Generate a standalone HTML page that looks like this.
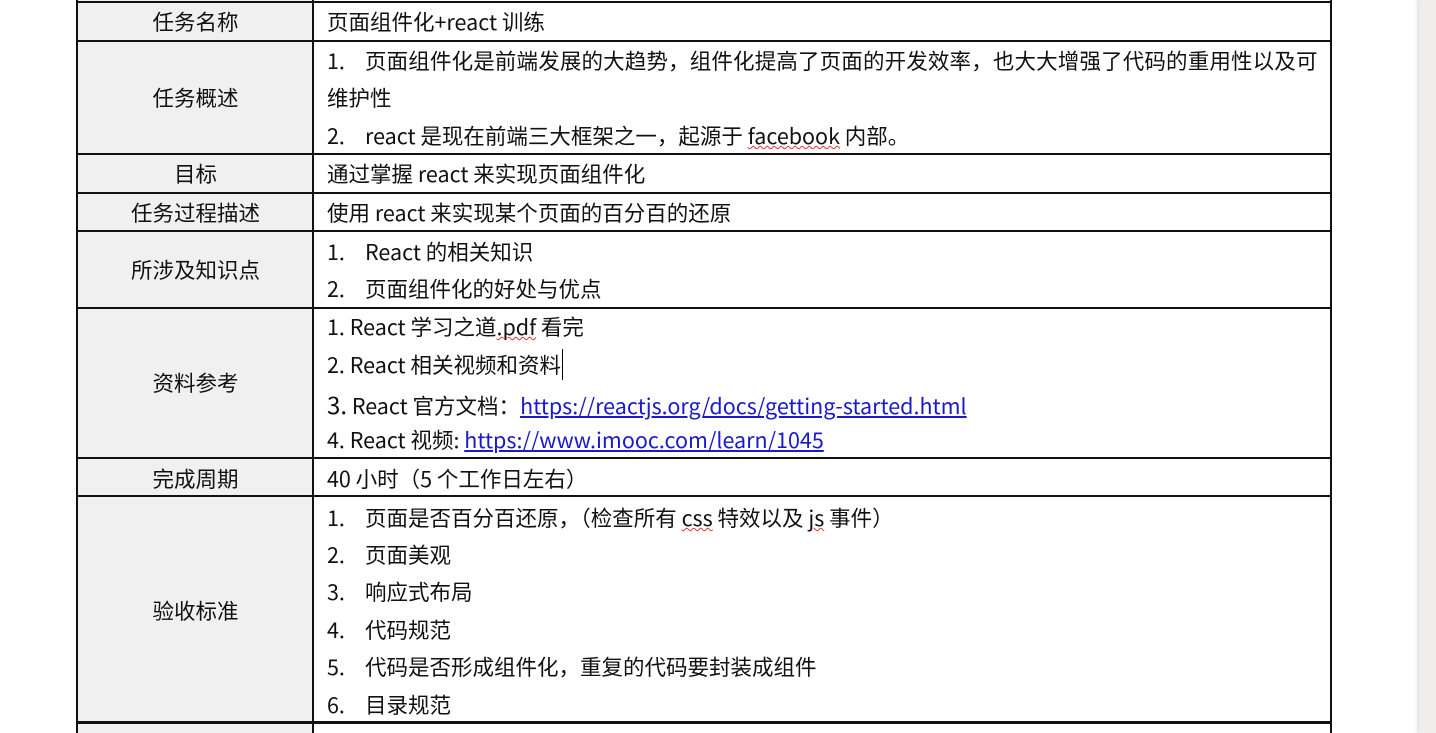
<!DOCTYPE html>
<html><head><meta charset="utf-8"><style>
html,body{margin:0;padding:0;width:1436px;height:733px;overflow:hidden;background:#fff;}
body{position:relative;font-family:"Noto Sans CJK SC","Liberation Sans",sans-serif;font-size:21.5px;color:#111;}
.g{position:absolute;left:78px;width:235px;background:#f0f0f0;}
.h{position:absolute;left:77px;width:1255px;height:2px;background:#111;}
.v{position:absolute;top:0;width:2px;height:733px;background:#111;}
.t{position:absolute;white-space:nowrap;line-height:28px;height:28px;}
.c{left:78px;width:235px;text-align:center;}
.n{left:327px;}
.x{left:365px;}
a{color:#1a1acc;text-decoration:underline;}
.sq{text-decoration:underline wavy #d33;text-decoration-thickness:1px;}
.side{position:absolute;left:1419px;top:0;width:17px;height:733px;background:#efeeed;box-shadow:-2px 0 3px rgba(0,0,0,0.12);}
</style></head><body>
<div class="g" style="top:0;height:733px"></div>
<div class="h" style="top:1px"></div>
<div class="h" style="top:40px"></div>
<div class="h" style="top:153px"></div>
<div class="h" style="top:192px"></div>
<div class="h" style="top:230px"></div>
<div class="h" style="top:307px"></div>
<div class="h" style="top:457px"></div>
<div class="h" style="top:495px"></div>
<div class="h" style="top:721px;height:3px"></div>
<div class="v" style="left:76px"></div>
<div class="v" style="left:312px"></div>
<div class="v" style="left:1330px"></div>
<div class="side"></div>

<div class="t c" style="top:8px">任务名称</div>
<div class="t n" style="top:8px">页面组件化+react 训练</div>

<div class="t c" style="top:84px">任务概述</div>
<div class="t n" style="top:47px">1.</div><div class="t x" style="top:47px;letter-spacing:0.15px">页面组件化是前端发展的大趋势，组件化提高了页面的开发效率，也大大增强了代码的重用性以及可</div>
<div class="t n" style="top:84px">维护性</div>
<div class="t n" style="top:122px">2.</div><div class="t x" style="top:122px">react 是现在前端三大框架之一，起源于 <span class="sq">facebook</span> 内部。</div>

<div class="t c" style="top:160px">目标</div>
<div class="t n" style="top:160px">通过掌握 react 来实现页面组件化</div>

<div class="t c" style="top:199px">任务过程描述</div>
<div class="t n" style="top:199px">使用 react 来实现某个页面的百分百的还原</div>

<div class="t c" style="top:256px">所涉及知识点</div>
<div class="t n" style="top:238px">1.</div><div class="t x" style="top:238px">React 的相关知识</div>
<div class="t n" style="top:275px">2.</div><div class="t x" style="top:275px">页面组件化的好处与优点</div>

<div class="t c" style="top:369px">资料参考</div>
<div class="t n" style="top:313px">1. React 学习之道<span class="sq">.pdf</span> 看完</div>
<div class="t n" style="top:351px">2. React 相关视频和资料<span style="border-left:1px solid #000;margin-left:1px"></span></div>
<div class="t n" style="top:390px"><span style="font-size:24px">3.</span> React 官方文档：<a>https://reactjs.org/docs/getting-started.html</a></div>
<div class="t n" style="top:426px">4. React 视频: <a>https://www.imooc.com/learn/1045</a></div>

<div class="t c" style="top:465px">完成周期</div>
<div class="t n" style="top:465px">40 小时（5 个工作日左右）</div>

<div class="t c" style="top:597px">验收标准</div>
<div class="t n" style="top:504px">1.</div><div class="t x" style="top:504px">页面是否百分百还原，（检查所有 <span class="sq">css</span> 特效以及 <span class="sq">js</span> 事件）</div>
<div class="t n" style="top:541px">2.</div><div class="t x" style="top:541px">页面美观</div>
<div class="t n" style="top:578px">3.</div><div class="t x" style="top:578px">响应式布局</div>
<div class="t n" style="top:616px">4.</div><div class="t x" style="top:616px">代码规范</div>
<div class="t n" style="top:653px">5.</div><div class="t x" style="top:653px">代码是否形成组件化，重复的代码要封装成组件</div>
<div class="t n" style="top:691px">6.</div><div class="t x" style="top:691px">目录规范</div>
</body></html>
